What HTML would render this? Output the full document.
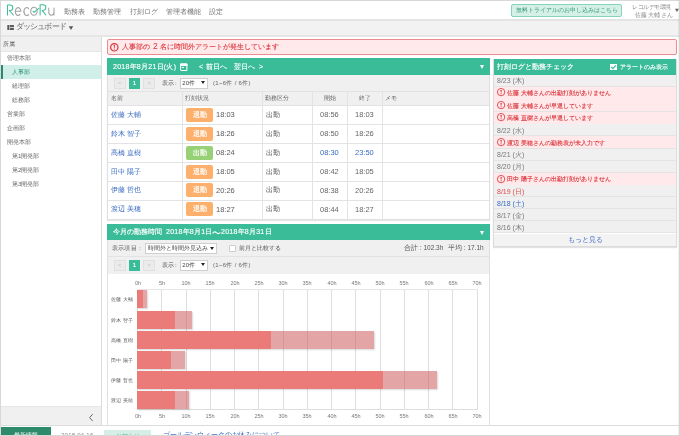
<!DOCTYPE html>
<html><head><meta charset="utf-8">
<style>
*{margin:0;padding:0;box-sizing:border-box}
html,body{width:680px;height:436px;overflow:hidden;background:#fff}
body{position:relative;font-family:"Liberation Sans",sans-serif;color:#555;font-size:7px;line-height:10px}
.a{position:absolute;white-space:nowrap}
div{will-change:transform}
.frame{position:absolute;left:0;top:0;width:680px;height:436px;border:1px solid #d8d8d8;border-right:1px solid #d5d5d5;pointer-events:none;z-index:50}
.gh{background:#3abc99;color:#fff}
.gray{background:#f0f0f0}
.btn{position:absolute;border:1px solid #e0e0e0;background:#ebebeb;color:#c0c0c0;font-size:6px;line-height:9px;text-align:center}
.btnon{position:absolute;background:#3abc99;color:#fff;font-size:5.5px;line-height:11px;text-align:center;-webkit-text-stroke:0.2px #fff}
.sel2{position:absolute;border:1px solid #cfcfcf;background:#fff;font-size:6.5px;line-height:9px;color:#444}
.vl{position:absolute;width:1px;background:#e3e3e3}
.hl{position:absolute;height:1px;background:#e3e3e3}
.badge{position:absolute;width:27px;height:14px;border-radius:2px;color:#fff;font-size:7px;line-height:14px;text-align:center;-webkit-text-stroke:0.15px #fff}
.or{background:#fcb06b}
.gr{background:#98d076}
.ic{position:absolute;border:1.2px solid #d9343a;border-radius:50%}
.bar{position:absolute;background:#eb7b79}
.barl{position:absolute;background:rgba(206,91,93,0.55)}
</style></head><body>
<div class="frame"></div>
<div class="a" style="left:678px;top:0;width:1px;height:436px;background:rgba(0,0,0,0.06);z-index:50"></div>
<svg class="a" style="left:0;top:0" width="60" height="20" viewBox="0 0 60 20">
 <g fill="none" stroke-width="1.05" stroke-linecap="round" stroke-linejoin="round">
  <path d="M7.5 15V4.9H10a2.8 2.8 0 0 1 0 5.6H9.3L13.4 15" stroke="#3dbe98"/>
  <path d="M15.5 11.3h5.4a2.8 3.9 0 1 0-0.9 3.1" stroke="#a2a2a2"/>
  <path d="M28.6 8.6a2.8 4 0 1 0 0 6" stroke="#a2a2a2"/>
  <ellipse cx="33.9" cy="11.25" rx="3.2" ry="4" stroke="#a2a2a2"/>
  <path d="M33 11.2l1.1 1.1 4.6-3.9" stroke="#3dbe98"/>
  <path d="M40.1 14.9V4.8h2.9a2.8 2.8 0 0 1 0 5.6H42.2L45.8 15" stroke="#3dbe98"/>
  <path d="M48.8 8v4.3a2.6 2.9 0 0 0 5.2 0V8M54 8v7" stroke="#a2a2a2"/>
 </g>
</svg>
<div class="a" style="left:64px;top:7.00px;font-size:7px;line-height:10px;color:#777;">勤務表</div>
<div class="a" style="left:93px;top:7.00px;font-size:7px;line-height:10px;color:#777;">勤務管理</div>
<div class="a" style="left:130px;top:7.00px;font-size:7px;line-height:10px;color:#777;">打刻ログ</div>
<div class="a" style="left:166px;top:7.00px;font-size:7px;line-height:10px;color:#777;">管理者機能</div>
<div class="a" style="left:209px;top:7.00px;font-size:7px;line-height:10px;color:#777;">設定</div>
<div class="a" style="left:510.5px;top:4px;width:111px;height:12.5px;border:1px solid #86d3b8;background:#d5f0e6;border-radius:2px;color:#359a7c;font-size:6px;line-height:10.5px;text-align:center">無料トライアルのお申し込みはこちら</div>
<div class="a" style="left:631.7px;top:3.30px;font-size:5.5px;line-height:8px;color:#8a8a8a;letter-spacing:-0.45px;">レコルデモ環境</div>
<div class="a" style="left:635px;top:10.60px;font-size:5.5px;line-height:8px;color:#8a8a8a;letter-spacing:-0.45px;">佐藤</div>
<div class="a" style="left:648px;top:10.60px;font-size:5.5px;line-height:8px;color:#8a8a8a;letter-spacing:-0.45px;">大輔</div>
<div class="a" style="left:661.2px;top:10.60px;font-size:5.5px;line-height:8px;color:#8a8a8a;letter-spacing:-0.45px;">さん</div>
<svg class="a" style="left:674px;top:8px" width="6" height="5"><path d="M1 0.8H4.9L2.95 4z" fill="#666"/></svg>
<div class="a" style="left:0;top:19px;width:680px;height:18px;background:#f2f2f2;border-top:2px solid #e4e4e4;border-bottom:2px solid #e6e6e6"></div>
<svg class="a" style="left:7px;top:25px" width="8" height="6"><g fill="#5a5a5a"><rect x="0.3" y="0" width="2" height="5"/><rect x="2.8" y="0" width="4.1" height="2.1"/><rect x="2.8" y="2.9" width="4.1" height="2.1"/></g></svg>
<div class="a" style="left:16.4px;top:22.30px;font-size:7.5px;line-height:10px;color:#666;letter-spacing:-0.9px;">ダッシュボード</div>
<svg class="a" style="left:68px;top:25px" width="6" height="6"><path d="M0.8 1.2H5.2L3 4.9z" fill="#555"/></svg>
<div class="a" style="left:0;top:37px;width:101px;height:15px;background:#f0f0f0;border-bottom:1px solid #e6e6e6"></div>
<div class="a" style="left:3.3px;top:39.80px;font-size:6.3px;line-height:8px;color:#666;">所属</div>
<div class="a" style="left:101px;top:37px;width:1px;height:389px;background:#dcdcdc"></div>
<div class="a" style="left:0;top:65px;width:101px;height:14px;background:#cfefe8"></div>
<div class="a" style="left:1px;top:65px;width:2px;height:14px;background:#2b8a6c"></div>
<div class="a" style="left:7.4px;top:54.20px;font-size:6.2px;line-height:8px;color:#666;">管理本部</div>
<div class="a" style="left:11.7px;top:68.20px;font-size:6.2px;line-height:8px;color:#2a9272;">人事部</div>
<div class="a" style="left:11.7px;top:82.20px;font-size:6.2px;line-height:8px;color:#666;">経理部</div>
<div class="a" style="left:11.7px;top:96.20px;font-size:6.2px;line-height:8px;color:#666;">総務部</div>
<div class="a" style="left:7.4px;top:110.20px;font-size:6.2px;line-height:8px;color:#666;">営業部</div>
<div class="a" style="left:7.4px;top:124.20px;font-size:6.2px;line-height:8px;color:#666;">企画部</div>
<div class="a" style="left:7.4px;top:138.20px;font-size:6.2px;line-height:8px;color:#666;">開発本部</div>
<div class="a" style="left:11.7px;top:152.20px;font-size:6.2px;line-height:8px;color:#666;">第1開発部</div>
<div class="a" style="left:11.7px;top:166.20px;font-size:6.2px;line-height:8px;color:#666;">第2開発部</div>
<div class="a" style="left:11.7px;top:180.20px;font-size:6.2px;line-height:8px;color:#666;">第3開発部</div>
<div class="a" style="left:0;top:406px;width:101px;height:20px;background:#f0f0f0;border-top:1px solid #e6e6e6"></div>
<svg class="a" style="left:88px;top:412.5px" width="6" height="9"><path d="M4.6 1.2L1.6 4.6 4.6 8" stroke="#666" stroke-width="1" fill="none"/></svg>
<div class="a" style="left:107px;top:39px;width:570px;height:16px;border:1px solid #eb8d8f;background:#ffe9eb;border-radius:2px"></div>
<svg class="a" style="left:109.20px;top:42.20px" width="10.6" height="10.6"><circle cx="5.3" cy="5.3" r="3.70" fill="none" stroke="#d9343a" stroke-width="1.2"/><path d="M4.60 3.06h1.4l-0.4 2.84h-0.6z" fill="#d9343a"/><rect x="4.80" y="6.59" width="1" height="1" fill="#d9343a"/></svg>
<div class="a" style="left:122.3px;top:42.20px;font-size:7px;line-height:10px;color:#d9343a;-webkit-text-stroke:0.1px #d9343a">人事部の</div>
<div class="a" style="left:152.5px;top:41.30px;font-size:8.5px;line-height:11px;color:#d9343a;">2</div>
<div class="a" style="left:159.6px;top:42.20px;font-size:7px;line-height:10px;color:#d9343a;-webkit-text-stroke:0.1px #d9343a">名に時間外アラートが発生しています</div>
<div class="a" style="left:107px;top:58px;width:383px;height:162px;border:1px solid #e0e0e0;box-shadow:0 1px 1px #e6e6e6;background:#fff"></div>
<div class="a gh" style="left:107px;top:58px;width:383px;height:17px"></div>
<div class="a" style="left:112.5px;top:62.00px;font-size:7px;line-height:10px;color:#fff;letter-spacing:0.26px;-webkit-text-stroke:0.15px #fff">2018年8月21日(火)</div>
<svg class="a" style="left:180px;top:63px" width="8" height="8" viewBox="0 0 8 8"><rect x="0.6" y="1" width="6.3" height="6.4" rx="0.7" fill="none" stroke="#fff" stroke-width="1.05"/><path d="M0.1 2.9V1.2Q0.1 0.4 0.9 0.4H6.6Q7.4 0.4 7.4 1.2V2.9z" fill="#fff"/><rect x="2" y="3.9" width="1.8" height="1.2" fill="#fff"/></svg>
<div class="a" style="left:199px;top:62.00px;font-size:7px;line-height:10px;color:#fff;-webkit-text-stroke:0.15px #fff">&lt;</div>
<div class="a" style="left:206.2px;top:62.00px;font-size:7px;line-height:10px;color:#fff;-webkit-text-stroke:0.15px #fff">前日へ</div>
<div class="a" style="left:234.4px;top:62.00px;font-size:7px;line-height:10px;color:#fff;-webkit-text-stroke:0.15px #fff">翌日へ</div>
<div class="a" style="left:259px;top:62.00px;font-size:7px;line-height:10px;color:#fff;-webkit-text-stroke:0.15px #fff">&gt;</div>
<div class="a" style="left:479.8px;top:65px;width:0;height:0;border-left:2.5px solid transparent;border-right:2.5px solid transparent;border-top:4px solid #fff"></div>
<div class="a gray" style="left:108px;top:75px;width:381px;height:16.5px"></div>
<div class="btn" style="left:114.3px;top:78px;width:11.6px;height:11px">&lt;</div>
<div class="btnon" style="left:129px;top:78px;width:11.3px;height:11px">1</div>
<div class="btn" style="left:143.2px;top:78px;width:12.4px;height:11px">&gt;</div>
<div class="a" style="left:162px;top:79.00px;font-size:6px;line-height:9px;color:#555;letter-spacing:0.2px;">表示</div>
<div class="a" style="left:175px;top:78.80px;font-size:6px;line-height:9px;color:#555;">:</div>
<div class="sel2" style="left:180px;top:78.2px;width:27.6px;height:10.6px;padding-left:1.3px;font-size:6px">20件</div>
<div class="a" style="left:200.8px;top:81.4px;width:0;height:0;border-left:2px solid transparent;border-right:2px solid transparent;border-top:3px solid #223"></div>
<div class="a" style="left:212.8px;top:79.00px;font-size:6px;line-height:9px;color:#666;letter-spacing:0.3px;">(1~6件 / 6件)</div>
<div class="a gray" style="left:108px;top:91px;width:381px;height:14.3px;border-top:1px solid #e3e3e3"></div>
<div class="a" style="left:110.6px;top:94.00px;font-size:6px;line-height:9px;color:#666;">名前</div>
<div class="a" style="left:185.3px;top:94.00px;font-size:6px;line-height:9px;color:#666;">打刻状況</div>
<div class="a" style="left:265px;top:94.00px;font-size:6px;line-height:9px;color:#666;">勤務区分</div>
<div class="a" style="left:324px;top:94.00px;font-size:6px;line-height:9px;color:#666;">開始</div>
<div class="a" style="left:359px;top:94.00px;font-size:6px;line-height:9px;color:#666;">終了</div>
<div class="a" style="left:384.8px;top:94.00px;font-size:6px;line-height:9px;color:#666;">メモ</div>
<div class="vl" style="left:182px;top:91px;height:128px"></div>
<div class="vl" style="left:262px;top:91px;height:128px"></div>
<div class="vl" style="left:312px;top:91px;height:128px"></div>
<div class="vl" style="left:347px;top:91px;height:128px"></div>
<div class="vl" style="left:382px;top:91px;height:128px"></div>
<div class="hl" style="left:108px;top:105.30px;width:381px"></div>
<div class="a" style="left:110.6px;top:109.80px;font-size:7px;line-height:10px;color:#3a6bc2;">佐藤 大輔</div>
<div class="badge or" style="left:185.8px;top:107.80px">退勤</div>
<div class="a" style="left:216.2px;top:110.10px;font-size:7.5px;line-height:10px;color:#5a5a5a;">18:03</div>
<div class="a" style="left:265.9px;top:109.80px;font-size:7px;line-height:10px;color:#555;">出勤</div>
<div class="a" style="left:320px;top:110.10px;font-size:7.5px;line-height:10px;color:#666;">08:56</div>
<div class="a" style="left:355px;top:110.10px;font-size:7.5px;line-height:10px;color:#666;">18:03</div>
<div class="hl" style="left:108px;top:124.22px;width:381px"></div>
<div class="a" style="left:110.6px;top:128.72px;font-size:7px;line-height:10px;color:#3a6bc2;">鈴木 智子</div>
<div class="badge or" style="left:185.8px;top:126.72px">退勤</div>
<div class="a" style="left:216.2px;top:129.02px;font-size:7.5px;line-height:10px;color:#5a5a5a;">18:26</div>
<div class="a" style="left:265.9px;top:128.72px;font-size:7px;line-height:10px;color:#555;">出勤</div>
<div class="a" style="left:320px;top:129.02px;font-size:7.5px;line-height:10px;color:#666;">08:50</div>
<div class="a" style="left:355px;top:129.02px;font-size:7.5px;line-height:10px;color:#666;">18:26</div>
<div class="hl" style="left:108px;top:143.14px;width:381px"></div>
<div class="a" style="left:110.6px;top:147.64px;font-size:7px;line-height:10px;color:#3a6bc2;">高橋 直樹</div>
<div class="badge gr" style="left:185.8px;top:145.64px">出勤</div>
<div class="a" style="left:216.2px;top:147.94px;font-size:7.5px;line-height:10px;color:#5a5a5a;">08:24</div>
<div class="a" style="left:265.9px;top:147.64px;font-size:7px;line-height:10px;color:#555;">出勤</div>
<div class="a" style="left:320px;top:147.94px;font-size:7.5px;line-height:10px;color:#3a6bc2;">08:30</div>
<div class="a" style="left:355px;top:147.94px;font-size:7.5px;line-height:10px;color:#3a6bc2;">23:50</div>
<div class="hl" style="left:108px;top:162.06px;width:381px"></div>
<div class="a" style="left:110.6px;top:166.56px;font-size:7px;line-height:10px;color:#3a6bc2;">田中 陽子</div>
<div class="badge or" style="left:185.8px;top:164.56px">退勤</div>
<div class="a" style="left:216.2px;top:166.86px;font-size:7.5px;line-height:10px;color:#5a5a5a;">18:05</div>
<div class="a" style="left:265.9px;top:166.56px;font-size:7px;line-height:10px;color:#555;">出勤</div>
<div class="a" style="left:320px;top:166.86px;font-size:7.5px;line-height:10px;color:#666;">08:42</div>
<div class="a" style="left:355px;top:166.86px;font-size:7.5px;line-height:10px;color:#666;">18:05</div>
<div class="hl" style="left:108px;top:180.98px;width:381px"></div>
<div class="a" style="left:110.6px;top:185.48px;font-size:7px;line-height:10px;color:#3a6bc2;">伊藤 哲也</div>
<div class="badge or" style="left:185.8px;top:183.48px">退勤</div>
<div class="a" style="left:216.2px;top:185.78px;font-size:7.5px;line-height:10px;color:#5a5a5a;">20:26</div>
<div class="a" style="left:265.9px;top:185.48px;font-size:7px;line-height:10px;color:#555;">出勤</div>
<div class="a" style="left:320px;top:185.78px;font-size:7.5px;line-height:10px;color:#666;">08:38</div>
<div class="a" style="left:355px;top:185.78px;font-size:7.5px;line-height:10px;color:#666;">20:26</div>
<div class="hl" style="left:108px;top:199.90px;width:381px"></div>
<div class="a" style="left:110.6px;top:204.40px;font-size:7px;line-height:10px;color:#3a6bc2;">渡辺 美穂</div>
<div class="badge or" style="left:185.8px;top:202.40px">退勤</div>
<div class="a" style="left:216.2px;top:204.70px;font-size:7.5px;line-height:10px;color:#5a5a5a;">18:27</div>
<div class="a" style="left:265.9px;top:204.40px;font-size:7px;line-height:10px;color:#555;">出勤</div>
<div class="a" style="left:320px;top:204.70px;font-size:7.5px;line-height:10px;color:#666;">08:44</div>
<div class="a" style="left:355px;top:204.70px;font-size:7.5px;line-height:10px;color:#666;">18:27</div>
<div class="a" style="left:107px;top:224px;width:383px;height:210px;border:1px solid #e0e0e0;background:#fff"></div>
<div class="a gh" style="left:107px;top:224px;width:383px;height:16px"></div>
<div class="a" style="left:112.8px;top:227.00px;font-size:6.9px;line-height:10px;color:#fff;-webkit-text-stroke:0.15px #fff">今月の勤務時間</div>
<div class="a" style="left:166px;top:227.00px;font-size:7px;line-height:10px;color:#fff;letter-spacing:0.25px;-webkit-text-stroke:0.15px #fff">2018年8月1日</div>
<svg class="a" style="left:212px;top:229.8px" width="9" height="6"><path d="M0.6 3.4C2 1.4 3.2 1.6 4.4 2.7S6.9 4.2 8.3 2.2" fill="none" stroke="#fff" stroke-width="1.05"/></svg>
<div class="a" style="left:220.5px;top:227.00px;font-size:7px;line-height:10px;color:#fff;letter-spacing:0.25px;-webkit-text-stroke:0.15px #fff">2018年8月31日</div>
<div class="a" style="left:479.8px;top:230.5px;width:0;height:0;border-left:2.5px solid transparent;border-right:2.5px solid transparent;border-top:4px solid #fff"></div>
<div class="a gray" style="left:108px;top:240px;width:381px;height:17px;border-bottom:1px solid #e3e3e3"></div>
<div class="a" style="left:112.4px;top:244.00px;font-size:6px;line-height:9px;color:#555;letter-spacing:0.2px;">表示項目</div>
<div class="a" style="left:139px;top:243.80px;font-size:6px;line-height:9px;color:#555;">:</div>
<div class="sel2" style="left:144.7px;top:243px;width:71.8px;height:11px;padding-left:2px;font-size:6px;overflow:hidden;white-space:nowrap">時間外と時間外見込み</div>
<div class="a" style="left:209.8px;top:247.3px;width:0;height:0;border-left:2px solid transparent;border-right:2px solid transparent;border-top:3px solid #223"></div>
<div class="a" style="left:229px;top:245px;width:6.5px;height:6.5px;border:1px solid #ccc;background:#fff;border-radius:1px"></div>
<div class="a" style="left:238.8px;top:244.00px;font-size:6px;line-height:9px;color:#555;">前月と比較する</div>
<div class="a" style="left:403.6px;top:242.90px;font-size:6.5px;line-height:9px;color:#555;">合計 : 102.3h</div>
<div class="a" style="left:447.5px;top:242.90px;font-size:6.5px;line-height:9px;color:#555;">平均 : 17.1h</div>
<div class="a gray" style="left:108px;top:257px;width:381px;height:17px;border-bottom:1px solid #e6e6e6"></div>
<div class="a gray" style="left:108px;top:257px;width:381px;height:16.5px"></div>
<div class="btn" style="left:114.3px;top:260px;width:11.6px;height:11px">&lt;</div>
<div class="btnon" style="left:129px;top:260px;width:11.3px;height:11px">1</div>
<div class="btn" style="left:143.2px;top:260px;width:12.4px;height:11px">&gt;</div>
<div class="a" style="left:162px;top:261.00px;font-size:6px;line-height:9px;color:#555;letter-spacing:0.2px;">表示</div>
<div class="a" style="left:175px;top:260.80px;font-size:6px;line-height:9px;color:#555;">:</div>
<div class="sel2" style="left:180px;top:260.2px;width:27.6px;height:10.6px;padding-left:1.3px;font-size:6px">20件</div>
<div class="a" style="left:200.8px;top:263.4px;width:0;height:0;border-left:2px solid transparent;border-right:2px solid transparent;border-top:3px solid #223"></div>
<div class="a" style="left:212.8px;top:261.00px;font-size:6px;line-height:9px;color:#666;letter-spacing:0.3px;">(1~6件 / 6件)</div>
<div class="vl" style="left:137.00px;top:289.5px;height:120px;background:#dedede"></div>
<div class="a" style="left:127.50px;top:279px;width:20px;text-align:center;font-size:5.5px;line-height:8px;color:#777">0h</div>
<div class="a" style="left:127.50px;top:411.5px;width:20px;text-align:center;font-size:5.5px;line-height:8px;color:#777">0h</div>
<div class="vl" style="left:161.26px;top:289.5px;height:120px;background:#dedede"></div>
<div class="a" style="left:151.76px;top:279px;width:20px;text-align:center;font-size:5.5px;line-height:8px;color:#777">5h</div>
<div class="a" style="left:151.76px;top:411.5px;width:20px;text-align:center;font-size:5.5px;line-height:8px;color:#777">5h</div>
<div class="vl" style="left:185.53px;top:289.5px;height:120px;background:#dedede"></div>
<div class="a" style="left:176.03px;top:279px;width:20px;text-align:center;font-size:5.5px;line-height:8px;color:#777">10h</div>
<div class="a" style="left:176.03px;top:411.5px;width:20px;text-align:center;font-size:5.5px;line-height:8px;color:#777">10h</div>
<div class="vl" style="left:209.80px;top:289.5px;height:120px;background:#dedede"></div>
<div class="a" style="left:200.30px;top:279px;width:20px;text-align:center;font-size:5.5px;line-height:8px;color:#777">15h</div>
<div class="a" style="left:200.30px;top:411.5px;width:20px;text-align:center;font-size:5.5px;line-height:8px;color:#777">15h</div>
<div class="vl" style="left:234.06px;top:289.5px;height:120px;background:#dedede"></div>
<div class="a" style="left:224.56px;top:279px;width:20px;text-align:center;font-size:5.5px;line-height:8px;color:#777">20h</div>
<div class="a" style="left:224.56px;top:411.5px;width:20px;text-align:center;font-size:5.5px;line-height:8px;color:#777">20h</div>
<div class="vl" style="left:258.32px;top:289.5px;height:120px;background:#dedede"></div>
<div class="a" style="left:248.82px;top:279px;width:20px;text-align:center;font-size:5.5px;line-height:8px;color:#777">25h</div>
<div class="a" style="left:248.82px;top:411.5px;width:20px;text-align:center;font-size:5.5px;line-height:8px;color:#777">25h</div>
<div class="vl" style="left:282.59px;top:289.5px;height:120px;background:#dedede"></div>
<div class="a" style="left:273.09px;top:279px;width:20px;text-align:center;font-size:5.5px;line-height:8px;color:#777">30h</div>
<div class="a" style="left:273.09px;top:411.5px;width:20px;text-align:center;font-size:5.5px;line-height:8px;color:#777">30h</div>
<div class="vl" style="left:306.86px;top:289.5px;height:120px;background:#dedede"></div>
<div class="a" style="left:297.36px;top:279px;width:20px;text-align:center;font-size:5.5px;line-height:8px;color:#777">35h</div>
<div class="a" style="left:297.36px;top:411.5px;width:20px;text-align:center;font-size:5.5px;line-height:8px;color:#777">35h</div>
<div class="vl" style="left:331.12px;top:289.5px;height:120px;background:#dedede"></div>
<div class="a" style="left:321.62px;top:279px;width:20px;text-align:center;font-size:5.5px;line-height:8px;color:#777">40h</div>
<div class="a" style="left:321.62px;top:411.5px;width:20px;text-align:center;font-size:5.5px;line-height:8px;color:#777">40h</div>
<div class="vl" style="left:355.38px;top:289.5px;height:120px;background:#dedede"></div>
<div class="a" style="left:345.88px;top:279px;width:20px;text-align:center;font-size:5.5px;line-height:8px;color:#777">45h</div>
<div class="a" style="left:345.88px;top:411.5px;width:20px;text-align:center;font-size:5.5px;line-height:8px;color:#777">45h</div>
<div class="vl" style="left:379.65px;top:289.5px;height:120px;background:#dedede"></div>
<div class="a" style="left:370.15px;top:279px;width:20px;text-align:center;font-size:5.5px;line-height:8px;color:#777">50h</div>
<div class="a" style="left:370.15px;top:411.5px;width:20px;text-align:center;font-size:5.5px;line-height:8px;color:#777">50h</div>
<div class="vl" style="left:403.91px;top:289.5px;height:120px;background:#dedede"></div>
<div class="a" style="left:394.41px;top:279px;width:20px;text-align:center;font-size:5.5px;line-height:8px;color:#777">55h</div>
<div class="a" style="left:394.41px;top:411.5px;width:20px;text-align:center;font-size:5.5px;line-height:8px;color:#777">55h</div>
<div class="vl" style="left:428.18px;top:289.5px;height:120px;background:#dedede"></div>
<div class="a" style="left:418.68px;top:279px;width:20px;text-align:center;font-size:5.5px;line-height:8px;color:#777">60h</div>
<div class="a" style="left:418.68px;top:411.5px;width:20px;text-align:center;font-size:5.5px;line-height:8px;color:#777">60h</div>
<div class="vl" style="left:452.44px;top:289.5px;height:120px;background:#dedede"></div>
<div class="a" style="left:442.94px;top:279px;width:20px;text-align:center;font-size:5.5px;line-height:8px;color:#777">65h</div>
<div class="a" style="left:442.94px;top:411.5px;width:20px;text-align:center;font-size:5.5px;line-height:8px;color:#777">65h</div>
<div class="vl" style="left:476.71px;top:289.5px;height:120px;background:#dedede"></div>
<div class="a" style="left:467.21px;top:279px;width:20px;text-align:center;font-size:5.5px;line-height:8px;color:#777">70h</div>
<div class="a" style="left:467.21px;top:411.5px;width:20px;text-align:center;font-size:5.5px;line-height:8px;color:#777">70h</div>
<div class="hl" style="left:137px;top:409px;width:341px;background:#dedede"></div>
<div class="hl" style="left:137px;top:289px;width:341px;background:#e6e6e6"></div>
<div class="barl" style="left:137px;top:290.4px;width:10.2px;height:17.6px;box-shadow:1px 1px 1.5px rgba(0,0,0,0.15)"></div>
<div class="bar" style="left:137px;top:290.4px;width:6.3px;height:17.6px"></div>
<div class="a" style="left:110.5px;top:295.40px;font-size:5px;line-height:8px;color:#606060;letter-spacing:0.1px;">佐藤 大輔</div>
<div class="barl" style="left:137px;top:310.6px;width:55.1px;height:17.6px;box-shadow:1px 1px 1.5px rgba(0,0,0,0.15)"></div>
<div class="bar" style="left:137px;top:310.6px;width:37.8px;height:17.6px"></div>
<div class="a" style="left:110.5px;top:315.60px;font-size:5px;line-height:8px;color:#606060;letter-spacing:0.1px;">鈴木 智子</div>
<div class="barl" style="left:137px;top:330.7px;width:236.5px;height:17.6px;box-shadow:1px 1px 1.5px rgba(0,0,0,0.15)"></div>
<div class="bar" style="left:137px;top:330.7px;width:134.1px;height:17.6px"></div>
<div class="a" style="left:110.5px;top:335.70px;font-size:5px;line-height:8px;color:#606060;letter-spacing:0.1px;">高橋 直樹</div>
<div class="barl" style="left:137px;top:350.7px;width:48.0px;height:17.6px;box-shadow:1px 1px 1.5px rgba(0,0,0,0.15)"></div>
<div class="bar" style="left:137px;top:350.7px;width:33.6px;height:17.6px"></div>
<div class="a" style="left:110.5px;top:355.70px;font-size:5px;line-height:8px;color:#606060;letter-spacing:0.1px;">田中 陽子</div>
<div class="barl" style="left:137px;top:370.8px;width:300.0px;height:17.6px;box-shadow:1px 1px 1.5px rgba(0,0,0,0.15)"></div>
<div class="bar" style="left:137px;top:370.8px;width:245.5px;height:17.6px"></div>
<div class="a" style="left:110.5px;top:375.80px;font-size:5px;line-height:8px;color:#606060;letter-spacing:0.1px;">伊藤 哲也</div>
<div class="barl" style="left:137px;top:390.8px;width:52.2px;height:17.6px;box-shadow:1px 1px 1.5px rgba(0,0,0,0.15)"></div>
<div class="bar" style="left:137px;top:390.8px;width:37.5px;height:17.6px"></div>
<div class="a" style="left:110.5px;top:395.80px;font-size:5px;line-height:8px;color:#606060;letter-spacing:0.1px;">渡辺 美穂</div>
<div class="a" style="left:493px;top:58.5px;width:184px;height:188px;border:1px solid #dcdcdc;box-shadow:0 1px 1px #e2e2e2;background:#fff"></div>
<div class="a gh" style="left:494px;top:58.8px;width:182px;height:15.8px"></div>
<div class="a" style="left:497.2px;top:62.00px;font-size:7px;line-height:10px;color:#fff;-webkit-text-stroke:0.15px #fff">打刻ログと勤務チェック</div>
<div class="a" style="left:609.8px;top:64px;width:6.7px;height:5.8px;background:#fff"></div>
<svg class="a" style="left:609.8px;top:64px" width="7" height="6"><path d="M1.3 3l1.6 1.6L5.8 1.4" stroke="#3abc99" stroke-width="1.2" fill="none"/></svg>
<div class="a" style="left:619.8px;top:63.00px;font-size:6px;line-height:8px;color:#fff;-webkit-text-stroke:0.15px #fff">アラートのみ表示</div>
<div class="a" style="left:494px;top:74.60px;width:182px;height:12.05px;background:#f0f0f0;border-bottom:1px solid #e4e4e4"></div>
<div class="a" style="left:497.2px;top:76.30px;font-size:7px;line-height:9px;color:#7a7a7a;">8/23 (木)</div>
<div class="a" style="left:494px;top:86.65px;width:182px;height:12.5px;background:#ffe9eb;border-bottom:1px solid #e4e4e4"></div>
<svg class="a" style="left:496.20px;top:87.45px" width="10.2" height="10.2"><circle cx="5.1" cy="5.1" r="3.67" fill="none" stroke="#d9343a" stroke-width="0.85"/><path d="M4.40 2.97h1.4l-0.4 2.71h-0.6z" fill="#d9343a"/><rect x="4.60" y="6.33" width="1" height="1" fill="#d9343a"/></svg>
<div class="a" style="left:507px;top:88.25px;font-size:6.2px;line-height:9px;color:#d9343a;-webkit-text-stroke:0.12px #d9343a">佐藤 大輔さんの出勤打刻がありません</div>
<div class="a" style="left:494px;top:99.15px;width:182px;height:12.5px;background:#ffe9eb;border-bottom:1px solid #e4e4e4"></div>
<svg class="a" style="left:496.20px;top:99.95px" width="10.2" height="10.2"><circle cx="5.1" cy="5.1" r="3.67" fill="none" stroke="#d9343a" stroke-width="0.85"/><path d="M4.40 2.97h1.4l-0.4 2.71h-0.6z" fill="#d9343a"/><rect x="4.60" y="6.33" width="1" height="1" fill="#d9343a"/></svg>
<div class="a" style="left:507px;top:100.75px;font-size:6.2px;line-height:9px;color:#d9343a;-webkit-text-stroke:0.12px #d9343a">佐藤 大輔さんが早退しています</div>
<div class="a" style="left:494px;top:111.65px;width:182px;height:12.5px;background:#ffe9eb;border-bottom:1px solid #e4e4e4"></div>
<svg class="a" style="left:496.20px;top:112.45px" width="10.2" height="10.2"><circle cx="5.1" cy="5.1" r="3.67" fill="none" stroke="#d9343a" stroke-width="0.85"/><path d="M4.40 2.97h1.4l-0.4 2.71h-0.6z" fill="#d9343a"/><rect x="4.60" y="6.33" width="1" height="1" fill="#d9343a"/></svg>
<div class="a" style="left:507px;top:113.25px;font-size:6.2px;line-height:9px;color:#d9343a;-webkit-text-stroke:0.12px #d9343a">高橋 直樹さんが早退しています</div>
<div class="a" style="left:494px;top:124.15px;width:182px;height:12.05px;background:#f0f0f0;border-bottom:1px solid #e4e4e4"></div>
<div class="a" style="left:497.2px;top:125.85px;font-size:7px;line-height:9px;color:#7a7a7a;">8/22 (水)</div>
<div class="a" style="left:494px;top:136.20px;width:182px;height:12.5px;background:#ffe9eb;border-bottom:1px solid #e4e4e4"></div>
<svg class="a" style="left:496.20px;top:137.00px" width="10.2" height="10.2"><circle cx="5.1" cy="5.1" r="3.67" fill="none" stroke="#d9343a" stroke-width="0.85"/><path d="M4.40 2.97h1.4l-0.4 2.71h-0.6z" fill="#d9343a"/><rect x="4.60" y="6.33" width="1" height="1" fill="#d9343a"/></svg>
<div class="a" style="left:507px;top:137.80px;font-size:6.2px;line-height:9px;color:#d9343a;-webkit-text-stroke:0.12px #d9343a">渡辺 美穂さんの勤務表が未入力です</div>
<div class="a" style="left:494px;top:148.70px;width:182px;height:12.05px;background:#f0f0f0;border-bottom:1px solid #e4e4e4"></div>
<div class="a" style="left:497.2px;top:150.40px;font-size:7px;line-height:9px;color:#7a7a7a;">8/21 (火)</div>
<div class="a" style="left:494px;top:160.75px;width:182px;height:12.05px;background:#f0f0f0;border-bottom:1px solid #e4e4e4"></div>
<div class="a" style="left:497.2px;top:162.45px;font-size:7px;line-height:9px;color:#7a7a7a;">8/20 (月)</div>
<div class="a" style="left:494px;top:172.80px;width:182px;height:12.5px;background:#ffe9eb;border-bottom:1px solid #e4e4e4"></div>
<svg class="a" style="left:496.20px;top:173.60px" width="10.2" height="10.2"><circle cx="5.1" cy="5.1" r="3.67" fill="none" stroke="#d9343a" stroke-width="0.85"/><path d="M4.40 2.97h1.4l-0.4 2.71h-0.6z" fill="#d9343a"/><rect x="4.60" y="6.33" width="1" height="1" fill="#d9343a"/></svg>
<div class="a" style="left:507px;top:174.40px;font-size:6.2px;line-height:9px;color:#d9343a;-webkit-text-stroke:0.12px #d9343a">田中 陽子さんの出勤打刻がありません</div>
<div class="a" style="left:494px;top:185.30px;width:182px;height:12.05px;background:#f0f0f0;border-bottom:1px solid #e4e4e4"></div>
<div class="a" style="left:497.2px;top:187.00px;font-size:7px;line-height:9px;color:#e0484a;">8/19 (日)</div>
<div class="a" style="left:494px;top:197.35px;width:182px;height:12.05px;background:#f0f0f0;border-bottom:1px solid #e4e4e4"></div>
<div class="a" style="left:497.2px;top:199.05px;font-size:7px;line-height:9px;color:#3a6bc2;">8/18 (土)</div>
<div class="a" style="left:494px;top:209.40px;width:182px;height:12.05px;background:#f0f0f0;border-bottom:1px solid #e4e4e4"></div>
<div class="a" style="left:497.2px;top:211.10px;font-size:7px;line-height:9px;color:#7a7a7a;">8/17 (金)</div>
<div class="a" style="left:494px;top:221.45px;width:182px;height:12.05px;background:#f0f0f0;border-bottom:1px solid #e4e4e4"></div>
<div class="a" style="left:497.2px;top:223.15px;font-size:7px;line-height:9px;color:#7a7a7a;">8/16 (木)</div>
<div class="a" style="left:494px;top:233.50px;width:182px;height:12.3px;background:#f3f3f3;text-align:center;font-size:6.5px;line-height:12px;color:#3a6bc2">もっと見る</div>
<div class="a" style="left:0;top:425px;width:680px;height:11px;background:#fff;border-top:1px solid #dcdcdc;z-index:10"></div>
<div class="a" style="left:1px;top:426.5px;width:50px;height:9.5px;background:#2e8a6a;color:#fff;font-size:6px;line-height:16px;text-align:center;z-index:11;overflow:hidden">最新情報</div>
<div class="a" style="left:61px;top:430.3px;font-size:6px;line-height:10px;color:#888;z-index:11;letter-spacing:0.25px">2018.04.16</div>
<div class="a" style="left:103.5px;top:429.8px;width:47px;height:7px;background:#d5efe6;color:#5a9;font-size:6px;line-height:12px;text-align:center;z-index:11;overflow:hidden">お知らせ</div>
<div class="a" style="left:163px;top:429.3px;font-size:7px;line-height:12px;color:#3a6bc2;z-index:11;letter-spacing:-0.15px">ゴールデンウィークのお休みについて</div>
</body></html>
